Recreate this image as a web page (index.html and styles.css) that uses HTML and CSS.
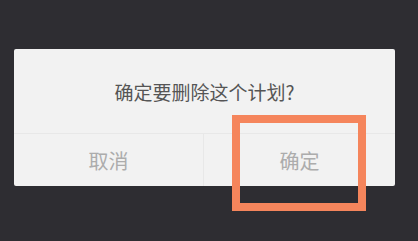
FILE: index.html
```html
<!DOCTYPE html>
<html lang="zh-CN">
<head>
<meta charset="utf-8">
<link rel="stylesheet" href="styles.css">
</head>
<body>
<div class="screen">
  <div class="dialog">
    <div class="title">确定要删除这个计划?</div>
    <div class="actions">
      <div class="btn cancel">取消</div>
      <div class="btn ok">确定</div>
    </div>
  </div>
  <div class="highlight"></div>
</div>
</body>
</html>
```
FILE: styles.css
```css
html, body {
  margin: 0;
  padding: 0;
  background: #2e2d32;
}
.screen {
  position: relative;
  width: 418px;
  height: 241px;
  padding: 49px 23px 0 14px;
  box-sizing: border-box;
  font-family: "Noto Sans CJK SC", "Noto Sans", sans-serif;
}
.dialog {
  background: #f2f2f2;
  border-radius: 2px;
  display: flex;
  flex-direction: column;
}
.title {
  height: 84px;
  display: flex;
  align-items: center;
  justify-content: center;
  font-size: 19px;
  color: #555555;
  padding-top: 1px;
  box-sizing: border-box;
}
.actions {
  display: flex;
  height: 52px;
  border-top: 1px solid #e8e8e8;
}
.btn {
  flex: 1;
  display: flex;
  align-items: center;
  justify-content: center;
  font-size: 20px;
  color: #acacac;
}
.cancel {
  border-right: 1px solid #e8e8e8;
  flex: 0 0 189px;
}
.highlight {
  position: absolute;
  left: 232px;
  top: 115px;
  width: 134px;
  height: 96px;
  border: 8px solid #f5855c;
  box-sizing: border-box;
}
```
